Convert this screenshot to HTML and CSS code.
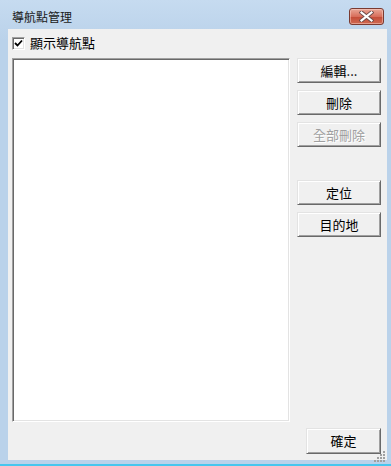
FILE: index.html
```html
<!DOCTYPE html>
<html>
<head>
<meta charset="utf-8">
<link rel="stylesheet" href="styles.css">
</head>
<body>
<div class="window">
  <div class="titlebar">
    <span class="title">導航點管理</span>
    <div class="close">
      <svg width="15" height="11" viewBox="0 0 15 11">
        <path d="M2.5 1.5 L12.5 9.5 M12.5 1.5 L2.5 9.5" stroke="#6b4a48" stroke-width="4" stroke-linecap="square"/>
        <path d="M2.5 1.5 L12.5 9.5 M12.5 1.5 L2.5 9.5" stroke="#ffffff" stroke-width="2.2" stroke-linecap="square"/>
      </svg>
    </div>
  </div>
  <div class="client">
    <div class="check-row">
      <span class="checkbox">
        <svg width="9" height="9" viewBox="0 0 9 9"><path d="M1 4 L3.5 6.5 L8 1.5" stroke="#000" stroke-width="1.8" fill="none"/></svg>
      </span>
      <span class="label">顯示導航點</span>
    </div>
    <div class="main">
      <div class="list"></div>
      <div class="buttons">
        <div class="btn">編輯...</div>
        <div class="btn">刪除</div>
        <div class="btn disabled">全部刪除</div>
        <div class="btn gap">定位</div>
        <div class="btn">目的地</div>
      </div>
    </div>
    <div class="footer">
      <div class="btn ok">確定</div>
    </div>
    <div class="grip">
      <svg width="12" height="12" viewBox="0 0 12 12">
        <g fill="#a0a0a0">
          <rect x="9" y="1" width="2" height="2"/>
          <rect x="6" y="4" width="2" height="2"/><rect x="9" y="4" width="2" height="2"/>
          <rect x="3" y="7" width="2" height="2"/><rect x="6" y="7" width="2" height="2"/><rect x="9" y="7" width="2" height="2"/>
          <rect x="0" y="10" width="2" height="2"/><rect x="3" y="10" width="2" height="2"/><rect x="6" y="10" width="2" height="2"/><rect x="9" y="10" width="2" height="2"/>
        </g>
      </svg>
    </div>
  </div>
</div>
</body>
</html>
```

FILE: styles.css
```css
html, body {
  margin: 0;
  padding: 0;
}
body {
  width: 391px;
  height: 466px;
  overflow: hidden;
  font-family: "Noto Sans CJK TC", "Noto Sans", sans-serif;
}
.window {
  width: 391px;
  height: 466px;
  box-sizing: border-box;
  background: linear-gradient(#c6dbf0, #bad2ea 40px, #bad2ea);
  border-bottom: 2px solid #47c6ee;
  padding: 0 4px 4px 8px;
  display: flex;
  flex-direction: column;
}
.titlebar {
  height: 29px;
  display: flex;
  align-items: center;
  justify-content: space-between;
  padding-left: 4px;
  box-sizing: border-box;
}
.title {
  font-size: 12px;
  line-height: 14px;
  color: #1a1a1a;
  margin-top: 4px;
}
.close {
  width: 33px;
  height: 15px;
  margin-top: 4px;
  margin-right: 3px;
  border: 1px solid #7a3a30;
  border-radius: 3px;
  background: linear-gradient(#e9a797, #d86e5b 50%, #c44b37 51%, #cf6a52);
  box-shadow: inset 0 0 0 1px rgba(255,220,210,0.45);
  display: flex;
  align-items: center;
  justify-content: center;
}
.client {
  flex: 1;
  position: relative;
  background: #f0f0f0;
  padding: 6px 0 0 4px;
  display: flex;
  flex-direction: column;
  font-size: 13px;
  color: #000;
}
.check-row {
  height: 16px;
  display: flex;
  align-items: center;
}
.checkbox {
  width: 9px;
  height: 9px;
  background: #fff;
  border-top: 1px solid #a0a0a0;
  border-left: 1px solid #a0a0a0;
  border-right: 1px solid #fff;
  border-bottom: 1px solid #fff;
  box-shadow: inset 1px 1px 0 #696969, inset -1px -1px 0 #e3e3e3;
  padding: 1px;
  display: flex;
  align-items: center;
  justify-content: center;
}
.label {
  margin-left: 5px;
  line-height: 16px;
}
.main {
  margin-top: 7px;
  height: 364px;
  display: flex;
  gap: 7px;
}
.list {
  width: 278px;
  box-sizing: border-box;
  background: #fff;
  border-top: 1px solid #a0a0a0;
  border-left: 1px solid #a0a0a0;
  border-right: 1px solid #fff;
  border-bottom: 1px solid #fff;
  box-shadow: inset 1px 1px 0 #696969, inset -1px -1px 0 #e3e3e3;
}
.buttons {
  display: flex;
  flex-direction: column;
  gap: 7px;
}
.btn {
  width: 84px;
  height: 25px;
  box-sizing: border-box;
  background: #f0f0f0;
  border-top: 1px solid #e3e3e3;
  border-left: 1px solid #e3e3e3;
  border-right: 1px solid #696969;
  border-bottom: 1px solid #696969;
  box-shadow: inset 1px 1px 0 #fff, inset -1px -1px 0 #a0a0a0;
  display: flex;
  align-items: center;
  justify-content: center;
  line-height: 16px;
}
.btn.disabled {
  color: #a0a0a0;
  text-shadow: 1px 1px 0 #fff;
}
.btn.gap {
  margin-top: 26px;
}
.footer {
  margin-top: 6px;
  display: flex;
  justify-content: flex-end;
  padding-right: 6px;
}
.btn.ok {
  width: 75px;
  height: 26px;
}
.grip {
  position: absolute;
  right: 1px;
  bottom: 1px;
  width: 12px;
  height: 12px;
}
```
